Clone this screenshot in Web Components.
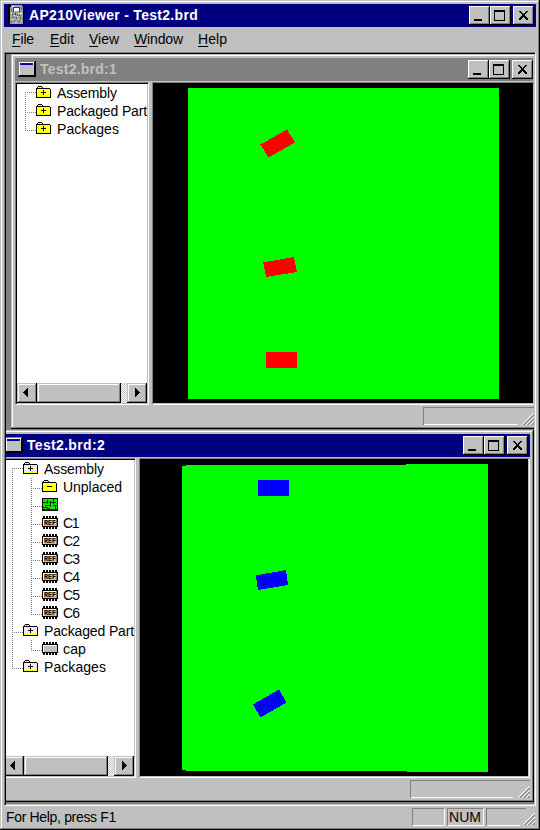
<!DOCTYPE html>
<html lang="en">
<head>
<meta charset="utf-8">
<title>AP210Viewer - Test2.brd</title>
<style>
html,body{margin:0;width:540px;height:830px;overflow:hidden;background:#c0c0c0}
body{font:14px/18px "Liberation Sans",Arial,sans-serif;color:#000}
</style>
</head>
<body>
<app-frame>
  <title-bar slot="title" icon="app" caption="AP210Viewer - Test2.brd" width="169"></title-bar>
  <menu-bar slot="menu"></menu-bar>
  <mdi-window class="one" style="left:5px;top:0;width:536px;height:375px">
    <title-bar slot="title" inactive icon="doc" caption="Test2.brd:1" width="77"></title-bar>
    <tree-row slot="tree" lines="M8.5 8V18M8 8.5H19" x="19" icon="plus" label="Assembly" width="60"></tree-row>
    <tree-row slot="tree" lines="M8.5 0V18M8 10.5H19" x="19" icon="plus" label="Packaged Part" width="90"></tree-row>
    <tree-row slot="tree" lines="M8.5 0V11M8 10.5H19" x="19" icon="plus" label="Packages" width="62"></tree-row>
    <svg slot="view" width="380" height="319" shape-rendering="crispEdges" viewBox="154 84 380 319" style="display:block">
      <path fill="#0f0" d="M188 88H499V399H188Z"/>
      <path fill="#f00" d="M260.5 144.5L287 129.5 295 142.5 268.5 157.5ZM263.3 262.4L294 257 297 272 266 277ZM266 352H297V368H266Z"/>
    </svg>
  </mdi-window>
  <mdi-window class="two" style="left:-8px;top:376px;width:536px;height:372px">
    <title-bar slot="title" icon="doc" caption="Test2.brd:2" width="78"></title-bar>
    <tree-row slot="tree" lines="M8.5 8V18M8 8.5H19" x="19" icon="plus" label="Assembly" width="60"></tree-row>
    <tree-row slot="tree" lines="M8.5 0V18M27.5 0V18M27 10.5H38" x="38" icon="minus" label="Unplaced" width="59"></tree-row>
    <tree-row slot="tree" lines="M8.5 0V18M27.5 0V18M27 10.5H38" x="38" icon="board" label=""></tree-row>
    <tree-row slot="tree" lines="M8.5 0V18M27.5 0V18M27 10.5H38" x="38" icon="ref" label="C1" width="15"></tree-row>
    <tree-row slot="tree" lines="M8.5 0V18M27.5 0V18M27 10.5H38" x="38" icon="ref" label="C2" width="16"></tree-row>
    <tree-row slot="tree" lines="M8.5 0V18M27.5 0V18M27 10.5H38" x="38" icon="ref" label="C3" width="16"></tree-row>
    <tree-row slot="tree" lines="M8.5 0V18M27.5 0V18M27 10.5H38" x="38" icon="ref" label="C4" width="16"></tree-row>
    <tree-row slot="tree" lines="M8.5 0V18M27.5 0V18M27 10.5H38" x="38" icon="ref" label="C5" width="16"></tree-row>
    <tree-row slot="tree" lines="M8.5 0V18M27.5 0V11M27 10.5H38" x="38" icon="ref" label="C6" width="16"></tree-row>
    <tree-row slot="tree" lines="M8.5 0V18M8 10.5H19" x="19" icon="plus" label="Packaged Part" width="90"></tree-row>
    <tree-row slot="tree" lines="M8.5 0V18M27.5 0V11M27 10.5H38" x="38" icon="chip" label="cap" width="23"></tree-row>
    <tree-row slot="tree" lines="M8.5 0V11M8 10.5H19" x="19" icon="plus" label="Packages" width="62"></tree-row>
    <svg slot="view" width="387" height="316" shape-rendering="crispEdges" viewBox="141 460 387 316" style="display:block">
      <path fill="#0f0" d="M182 466H186V465H406V464H488V772H407V771H186V770H182Z"/>
      <path fill="#00f" d="M258 480H289V496H258ZM255.8 575.4L286 570 288 585 258 590ZM253 704.5L279 689.5 286.5 702.5 260.5 717.5Z"/>
    </svg>
  </mdi-window>
  <status-bar slot="status"></status-bar>
</app-frame>

<script>
const GRIP = '<svg width="12" height="12" viewBox="0 0 12 12" style="display:block"><path d="M0 12L12 0M4 12L12 4M8 12L12 8" stroke="#fff" stroke-width="1.2"/><path d="M1.3 12L12 1.3M2.3 12L12 2.3M5.3 12L12 5.3M6.3 12L12 6.3M9.3 12L12 9.3M10.3 12L12 10.3" stroke="#808080"/></svg>';

const svg = (w, h, body) => `<svg width="${w}" height="${h}" viewBox="0 0 ${w} ${h}" shape-rendering="crispEdges" style="display:block">${body}</svg>`;

const folder = sign => svg(16, 13,
  '<defs><pattern id="p" width="2" height="2" patternUnits="userSpaceOnUse"><path fill="#fff" d="M0 0H2V2H0Z"/><path fill="#ff0" d="M0 0H1V1H0ZM1 1H2V2H1Z"/></pattern></defs>' +
  '<path d="M1 1H2V0H6V1H7V2H14V3H15V12H0V2H1Z"/><path fill="url(#p)" d="M1 3H14V11H1ZM2 1H6V2H2Z"/><path fill="#ff0" d="M1 10H14V11H1Z"/>' +
  `<path d="M5 6H10V7H5Z${sign === '+' ? 'M7 4H8V9H7Z' : ''}"/>`);

const PINS = 'M1 0H3V2H1ZM4 0H6V2H4ZM7 0H9V2H7ZM10 0H12V2H10ZM13 0H15V2H13ZM1 11H3V13H1ZM4 11H6V13H4ZM7 11H9V13H7ZM10 11H12V13H10ZM13 11H15V13H13Z';
const chip = inner => svg(16, 13, `<path d="${PINS}M0 2H16V11H0Z"/><path fill="#c0c0c0" d="M1 3H15V10H1Z"/>${inner}`);

const ICONS = {
  plus: folder('+'),
  minus: folder('-'),
  ref: chip('<path fill="#fff" d="M1 3H14V4H1ZM1 3H2V10H1Z"/><path fill="#808080" d="M14 3H15V10H14Z"/><text x="2" y="9" font-family="Liberation Mono" font-weight="700" font-size="7.5" textLength="12" lengthAdjust="spacingAndGlyphs">REF</text>'),
  chip: chip('<path fill="#fff" d="M1 3H14V4H1ZM1 3H2V10H1Z"/>'),
  board: svg(16, 13, '<path d="M0 0H16V13H0Z"/><path fill="#00f000" d="M1 1H15V11H1Z"/><path stroke="#003000" fill="none" d="M1 4.5H5M7 4.5H14M3 7.5H9M11 7.5H15M1 9.5H6M5.5 2V6M8.5 3V9M11.5 1V6M13.5 8V11"/><path fill="#800000" d="M3 11H13V12H3ZM5 10H8V11H5Z"/>'),
  doc: svg(18, 16, '<path d="M0 0H18V16H0Z"/><path fill="#808080" d="M0 0H17V1H0ZM0 0H1V15H0Z"/><path fill="#fff" d="M1 1H16V14H1Z"/><path fill="#c0c0c0" d="M2 4H16V14H2Z"/><path fill="#00f" d="M2 2H15V3H2Z"/><path fill="#0000a0" d="M2 3H15V4H2Z"/>'),
  app: svg(16, 19, '<path d="M0 0H16V19H0Z"/><path fill="#a0a0a0" d="M3 0H14V1H15V19H2V2H3Z"/><path fill="#fff" d="M6 3H11V6H6ZM4 1H6V2H4ZM3 8H4V9H3ZM12 8H14V9H12Z"/><path fill="#404040" d="M5 2H12V3H5ZM5 3H6V7H5ZM11 3H12V7H11ZM4 9H5V10H4ZM7 8H8V10H7ZM11 10H12V11H11Z"/><path fill="#686868" d="M3 4H4V6H3ZM13 2H14V5H13ZM5 8H6V9H5ZM9 9H10V11H9ZM4 12H6V13H4ZM8 12H9V14H8ZM12 12H13V15H12ZM6 15H7V17H6ZM10 16H12V17H10ZM3 16H4V18H3Z"/><path fill="#e0e0e0" d="M6 10H7V11H6ZM10 8H11V9H10ZM5 14H6V15H5ZM7 17H9V18H7ZM10 14H11V15H10ZM13 16H14V17H13ZM3 14H4V15H3ZM9 11H10V12H9Z"/>')
};

/* Single line of text whose letter spacing is adjusted to a given width. */
class FitText extends HTMLElement {
  connectedCallback() {
    const width = +this.getAttribute('width');
    const root = this.attachShadow({mode: 'open'});
    root.innerHTML = '<style>:host{display:block;white-space:pre}span{display:inline-block}</style><span><slot></slot></span>';
    const span = root.querySelector('span');
    const natural = span.getBoundingClientRect().width;
    const count = this.textContent.length;
    if (width && count) span.style.letterSpacing = (width - natural) / count + 'px';
  }
}
customElements.define('fit-text', FitText);

class CaptionButton extends HTMLElement {
  connectedCallback() {
    const shape = {
      min: 'M5 13H13V15H5Z',
      max: 'M4 4H15V15H4ZM5 6V14H14V6Z',
      close: 'M6 5H8V6H9V7H10V8H11V7H12V6H13V5H15V6H14V7H13V8H12V10H13V11H14V12H15V14H13V13H12V12H11V11H10V12H9V13H8V14H6V12H7V11H8V10H9V8H8V7H7V6H6Z'
    }[this.getAttribute('kind')];
    this.attachShadow({mode: 'open'}).innerHTML = `<style>:host{display:block;box-sizing:border-box;width:21px;height:19px;background:#c0c0c0;box-shadow:inset -1px -1px #000,inset 1px 1px #fff,inset -2px -2px #808080}</style>${svg(21, 19, `<path fill-rule="evenodd" d="${shape}"/>`)}`;
  }
}
customElements.define('caption-button', CaptionButton);

class TitleBar extends HTMLElement {
  connectedCallback() {
    const app = this.getAttribute('icon') === 'app';
    this.attachShadow({mode: 'open'}).innerHTML = `<style>
      :host{display:flex;flex:none;align-items:center;height:23px;background:#000080;color:#fff;font-weight:700;font-size:14px;box-sizing:border-box;padding:0 2px 0 ${app ? 4 : 3}px}
      :host([inactive]){background:#808080;color:#c0c0c0;padding-right:0}
      .icon{margin-top:${app ? -2 : -1}px}
      fit-text{flex:1;margin-left:${app ? 5 : 4}px;margin-top:-1px}
      .buttons{display:flex}.buttons :last-child{margin-left:2px}
    </style><div class="icon">${ICONS[this.getAttribute('icon')]}</div><fit-text width="${this.getAttribute('width')}">${this.getAttribute('caption')}</fit-text>
    <div class="buttons"><caption-button kind="min"></caption-button><caption-button kind="max"></caption-button><caption-button kind="close"></caption-button></div>`;
  }
}
customElements.define('title-bar', TitleBar);

class MenuBar extends HTMLElement {
  connectedCallback() {
    const items = [['File', 22, 16], ['Edit', 24, 15], ['View', 30, 15], ['Window', 49, 15], ['Help', 29, 0]];
    this.attachShadow({mode: 'open'}).innerHTML = `<style>:host{display:flex;flex:none;align-items:center;height:25px;padding:0 0 1px 8px;box-sizing:border-box}
      u{text-underline-offset:2px;text-decoration-thickness:1px;text-decoration-skip-ink:none}</style>` +
      items.map(([t, w, gap]) => `<fit-text width="${w}" style="width:${w}px;margin-right:${gap}px"><u>${t[0]}</u>${t.slice(1)}</fit-text>`).join('');
  }
}
customElements.define('menu-bar', MenuBar);

class TreeRow extends HTMLElement {
  connectedCallback() {
    const x = +this.getAttribute('x');
    this.attachShadow({mode: 'open'}).innerHTML = `<style>
      :host{display:grid;height:18px;overflow:hidden;grid-template-columns:${x}px 16px 1fr}
      .lines{grid-area:1/1/2/3;width:${x}px;overflow:hidden}
      .icon{grid-area:1/2;padding-top:2px}
      fit-text{grid-area:1/3;margin-left:5px;line-height:18px}
    </style><div class="lines"><svg width="40" height="18" shape-rendering="crispEdges" style="display:block"><path d="${this.getAttribute('lines')}" fill="none" stroke="#808080" stroke-dasharray="1 1"/></svg></div>
    <div class="icon">${ICONS[this.getAttribute('icon')]}</div><fit-text width="${this.getAttribute('width') || 0}">${this.getAttribute('label')}</fit-text>`;
  }
}
customElements.define('tree-row', TreeRow);

class ScrollBar extends HTMLElement {
  connectedCallback() {
    this.attachShadow({mode: 'open'}).innerHTML = `<style>
      :host{display:flex;height:20px;background:repeating-conic-gradient(#fff 0 25%,#c0c0c0 0 50%) 0 0/2px 2px}
      div{width:20px;height:20px;background:#c0c0c0;box-shadow:inset -1px -1px #000,inset 1px 1px #c0c0c0,inset -2px -2px #808080,inset 2px 2px #fff}
      .thumb{width:84px}.right{margin-left:auto}
    </style><div>${svg(20, 20, '<path d="M6 9H7V8H8V7H9V6H10V5H11V14H10V13H9V12H8V11H7V10H6Z"/>')}</div><div class="thumb"></div><div class="right">${svg(20, 20, '<path d="M13 9H12V8H11V7H10V6H9V5H8V14H9V13H10V12H11V11H12V10H13Z"/>')}</div>`;
  }
}
customElements.define('scroll-bar', ScrollBar);

class MdiWindow extends HTMLElement {
  connectedCallback() {
    this.attachShadow({mode: 'open'}).innerHTML = `<style>
      :host{position:absolute;box-sizing:border-box;display:flex;flex-direction:column;background:#c0c0c0;padding:4px;box-shadow:inset -1px -1px #000,inset 1px 1px #c0c0c0,inset -2px -2px #808080,inset 2px 2px #fff}
      .title{height:23px;flex:none}
      .main{flex:1;display:flex;min-height:0;padding-top:1px}
      .tree,.view{box-sizing:border-box;border:1px solid;border-color:#808080 #fff #fff #808080}
      .tree{width:134px;margin-right:3px;display:flex;flex-direction:column;background:#fff;box-shadow:inset 1px 1px #000,inset -1px -1px #c0c0c0;padding:1px}
      .rows{flex:1;min-height:0;overflow:hidden}
      .view{flex:1;min-width:0;background:#000;overflow:hidden;padding:1px;box-shadow:inset -1px -1px #c0c0c0}
      .status{flex:none;height:20px;box-sizing:border-box;padding-top:2px;display:flex;justify-content:flex-end}
      .pane{width:120px;height:18px;box-sizing:border-box;border-left:1px solid #808080;border-top:1px solid #808080;background:linear-gradient(#fff,#fff) 0 100%/102px 1px no-repeat;display:flex;align-items:flex-end;justify-content:flex-end}
      :host(.one) .title{margin-right:10px}
      :host(.one) .view{margin-right:8px}
      :host(.one) .pane{margin-right:9px;width:111px;background-size:94px 1px}
    </style><div class="title"><slot name="title"></slot></div>
    <div class="main"><div class="tree"><div class="rows"><slot name="tree"></slot></div><scroll-bar></scroll-bar></div><div class="view"><slot name="view"></slot></div></div>
    <div class="status"><div class="pane">${GRIP}</div></div>`;
  }
}
customElements.define('mdi-window', MdiWindow);

class StatusBar extends HTMLElement {
  connectedCallback() {
    this.attachShadow({mode: 'open'}).innerHTML = `<style>
      :host{display:flex;flex:none;height:20px;gap:2px;padding:2px 0 0 2px;box-sizing:border-box}
      .help{width:404px;line-height:18px}
      .pane{box-sizing:border-box;height:18px;border:1px solid;border-color:#808080 #fff #fff #808080;width:33px;line-height:17px}
      .num{width:37px;padding-left:1px}
      .last{width:40px;border-right:0;border-bottom:0;background:linear-gradient(#fff,#fff) 0 100%/33px 1px no-repeat}
      .grip{align-self:flex-start;margin:5px 0 0 -5px}
    </style><fit-text class="help" width="110">For Help, press F1</fit-text><div class="pane"></div><div class="pane num"><fit-text width="32">NUM</fit-text></div><div class="pane last"></div><div class="grip">${GRIP}</div>`;
  }
}
customElements.define('status-bar', StatusBar);

class AppFrame extends HTMLElement {
  connectedCallback() {
    this.attachShadow({mode: 'open'}).innerHTML = `<style>
      :host{display:flex;flex-direction:column;box-sizing:border-box;width:540px;height:830px;padding:4px;background:#c0c0c0;box-shadow:inset -1px -1px #000,inset 1px 1px #c0c0c0,inset -2px -2px #808080,inset 2px 2px #fff}
      .client{flex:none;height:754px;box-sizing:border-box;border:1px solid;border-color:#808080 #fff #fff #808080;background:#c0c0c0;padding:1px;box-shadow:inset 1px 1px #000}
      .canvas{position:relative;width:528px;height:750px;background:#808080;overflow:hidden}
    </style><slot name="title"></slot><slot name="menu"></slot><div class="client"><div class="canvas"><slot></slot></div></div><slot name="status"></slot>`;
  }
}
customElements.define('app-frame', AppFrame);
</script>
</body>
</html>
